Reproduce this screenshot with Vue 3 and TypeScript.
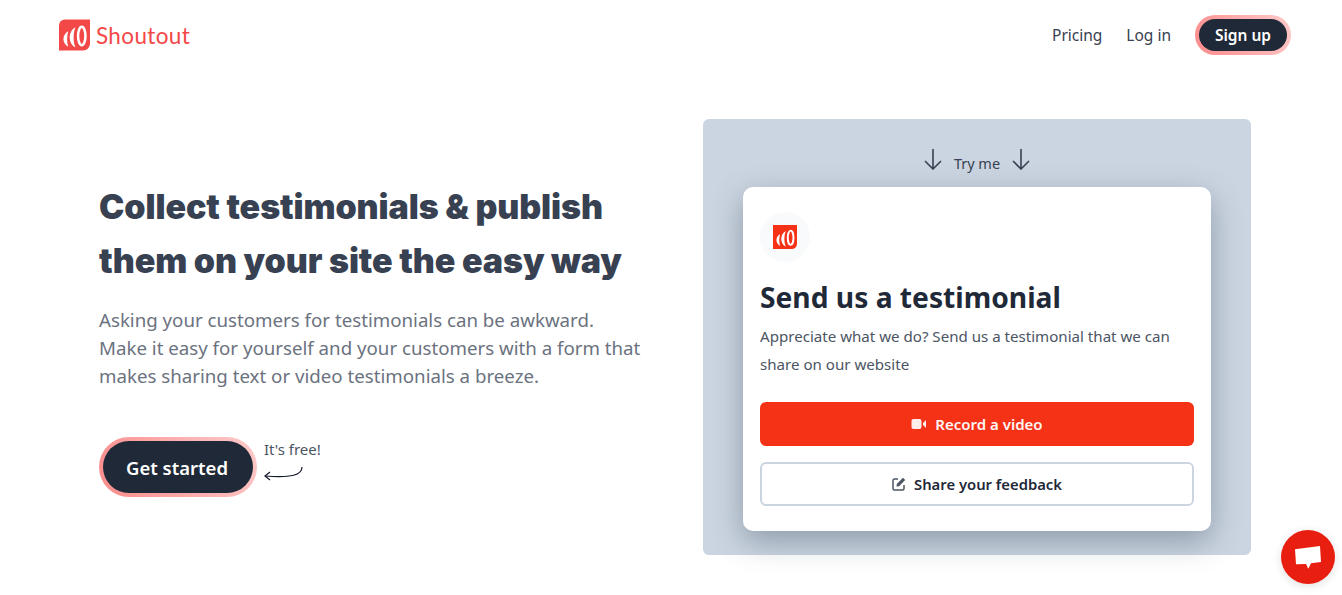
<template>
  <div class="page">
    <!-- Шапка -->
    <header class="nav">
      <a class="brand">
        <svg class="brand-icon" viewBox="0 0 32 32">
          <path d="M6 0H32V25a7 7 0 0 1-7 7H0V6a6 6 0 0 1 6-6z" fill="#f34848" />
          <path d="M9.500 12C3 16 3 24 9.500 28C8 23 8 17 9.500 12z" fill="#fff" />
          <path d="M17 8C9 12 9 25 17 29C14.500 23 14.500 14 17 8z" fill="#fff" />
          <ellipse cx="23.500" cy="17" rx="3.800" ry="9.500" fill="none" stroke="#fff" stroke-width="2.600" />
        </svg>
        <span>Shoutout</span>
      </a>
      <nav class="nav-links">
        <a>Pricing</a>
        <a>Log in</a>
        <button class="cta cta-small">Sign up</button>
      </nav>
    </header>

    <main class="hero">
      <section class="intro">
        <h1>Collect testimonials &amp; publish them on your site the easy way</h1>
        <p>
          Asking your customers for testimonials can be awkward.<br />
          Make it easy for yourself and your customers with a form that makes sharing text or video
          testimonials a breeze.
        </p>
        <div class="start">
          <button class="cta cta-large">Get started</button>
          <div class="free">
            <span>It's free!</span>
            <svg width="40" height="16" viewBox="0 0 40 16" fill="none" stroke="#111827" stroke-width="1.200">
              <path d="M38 1C38 9 28 12 1 10" />
              <path d="M6 6L1 10L6 14" />
            </svg>
          </div>
        </div>
      </section>

      <section class="demo">
        <div class="try">
          <svg v-for="side in arrows" :key="side" width="20" height="22" viewBox="0 0 20 22" fill="none" stroke="#374151" stroke-width="1.600" :class="side">
            <path d="M10 1V21M2 13L10 21L18 13" />
          </svg>
          <span>Try me</span>
        </div>
        <div class="form-card">
          <div class="form-logo">
            <svg width="24" height="24" viewBox="0 0 32 32">
              <path d="M0 0H32V25a7 7 0 0 1-7 7H0z" fill="#f53216" />
              <path d="M9.500 12C3 16 3 24 9.500 28C8 23 8 17 9.500 12z" fill="#fff" />
              <path d="M17 8C9 12 9 25 17 29C14.500 23 14.500 14 17 8z" fill="#fff" />
              <ellipse cx="23.500" cy="17" rx="3.800" ry="9.500" fill="none" stroke="#fff" stroke-width="2.600" />
            </svg>
          </div>
          <h2>Send us a testimonial</h2>
          <p>Appreciate what we do? Send us a testimonial that we can share on our website</p>
          <button class="form-btn btn-video">
            <svg width="16" height="12" viewBox="0 0 16 12">
              <rect x="0.500" y="1" width="10" height="10" rx="2" fill="#fee" />
              <path d="M12 5L15 2V10L12 7z" fill="#fee" />
            </svg>
            Record a video
          </button>
          <button class="form-btn btn-text">
            <svg width="14" height="14" viewBox="0 0 14 14" fill="none">
              <path d="M6 2H2.500A1.500 1.500 0 0 0 1 3.500v8A1.500 1.500 0 0 0 2.500 13h8a1.500 1.500 0 0 0 1.500-1.500V8" stroke="#4b5563" stroke-width="1.500" />
              <path d="M11 0.800L13.200 3L7 9.200L4.500 9.500L4.800 7z" fill="#4b5563" />
            </svg>
            Share your feedback
          </button>
        </div>
      </section>
    </main>

    <button class="chat" aria-label="Chat">
      <svg width="26" height="23" viewBox="0 0 26 23">
        <path d="M0 3.300L25 0L26 16L16 17.200L13.300 22.700L11 18L1 18.300z" fill="#fff" />
      </svg>
    </button>
  </div>
</template>

<script setup lang="ts">
const arrows: string[] = ['left', 'right']
</script>

<style>
html,
body {
  margin: 0;
  background: #fff;
}
</style>

<style scoped>
.page {
  font-family: 'Noto Sans', 'Open Sans', sans-serif;
  height: 595px;
  overflow: hidden;
  position: relative;
  color: #374151;
}

.nav {
  display: flex;
  justify-content: space-between;
  align-items: center;
  height: 70px;
  padding: 0 51px 0 59px;
  box-sizing: border-box;
}

.brand {
  display: flex;
  align-items: center;
  gap: 6px;
  color: #f34848;
  font-family: Lato, sans-serif;
  font-size: 22.500px;
  letter-spacing: 0.35px;
}

.brand-icon {
  width: 31px;
  height: 32px;
}

.nav-links {
  display: flex;
  align-items: center;
  gap: 24px;
  font-size: 15.500px;
  color: #374151;
}

.cta {
  font-family: inherit;
  font-weight: 600;
  color: #fff;
  background: #1f2937;
  border: 4px solid transparent;
  border-radius: 999px;
  background-image: linear-gradient(#1f2937, #1f2937),
    linear-gradient(65deg, #fb8b8b, #fecaca);
  background-origin: border-box;
  background-clip: padding-box, border-box;
}

.cta-small {
  width: 96px;
  height: 40px;
  font-size: 15.500px;
  padding: 0;
}

.cta-large {
  width: 158px;
  height: 60px;
  font-size: 18.500px;
  padding: 0 2px 0 0;
}

.hero {
  display: flex;
  padding: 49px 91px 0 99px;
  justify-content: space-between;
}

.intro {
  width: 550px;
  padding-top: 61px;
}

h1 {
  margin: 0;
  font-family: Inter, sans-serif;
  font-size: 34px;
  line-height: 54px;
  font-weight: 900;
  letter-spacing: -0.1px;
  color: #374151;
}

.intro p {
  margin: 18px 0 0;
  font-size: 18.700px;
  line-height: 28px;
  color: #6b7280;
}

.start {
  display: flex;
  align-items: flex-start;
  gap: 7px;
  margin-top: 47px;
}

.free {
  display: flex;
  flex-direction: column;
  gap: 7px;
  padding-top: 2px;
  font-size: 15px;
  color: #4b5563;
}

.demo {
  width: 548px;
  height: 436px;
  background: #cbd5e1;
  border-radius: 6px;
  padding: 28px 40px 24px;
  box-sizing: border-box;
}

.try {
  display: flex;
  justify-content: center;
  align-items: center;
  gap: 11px;
  height: 28px;
  margin-bottom: 12px;
  font-size: 14.500px;
  color: #374151;
}

.try span {
  order: 1;
  margin-top: 4px;
}

.try svg {
  margin-bottom: 4px;
}

.try .right {
  order: 2;
}

.form-card {
  background: #fff;
  border-radius: 10px;
  padding: 25px 17px 24px;
  height: 344px;
  box-sizing: border-box;
  box-shadow: 0 10px 30px rgba(71, 85, 105, 0.45);
}

.form-logo {
  width: 50px;
  height: 50px;
  border-radius: 50%;
  background: #f9fafb;
  display: flex;
  align-items: center;
  justify-content: center;
}

h2 {
  margin: 14px 0 0;
  font-size: 28.200px;
  line-height: 42px;
  font-weight: 700;
  color: #1f2937;
}

.form-card p {
  margin: 4px 0 0;
  font-size: 15.100px;
  line-height: 28px;
  color: #4b5563;
}

.form-btn {
  width: 100%;
  height: 44px;
  display: flex;
  align-items: center;
  justify-content: center;
  gap: 8px;
  font-family: inherit;
  font-size: 15px;
  font-weight: 600;
  border-radius: 6px;
  box-sizing: border-box;
}

.btn-video {
  margin-top: 24px;
  background: #f53216;
  color: #fff5f5;
  border: none;
}

.btn-text {
  margin-top: 16px;
  background: #fff;
  color: #1f2937;
  font-size: 14.800px;
  border: 2px solid #cbd5e1;
}

.chat {
  position: absolute;
  left: 1281px;
  top: 530px;
  width: 54px;
  height: 54px;
  border: none;
  border-radius: 50%;
  background: #e81f10;
  padding: 0;
  display: flex;
  align-items: center;
  justify-content: center;
  box-shadow: 0 2px 10px rgba(0, 0, 0, 0.12);
}
</style>
